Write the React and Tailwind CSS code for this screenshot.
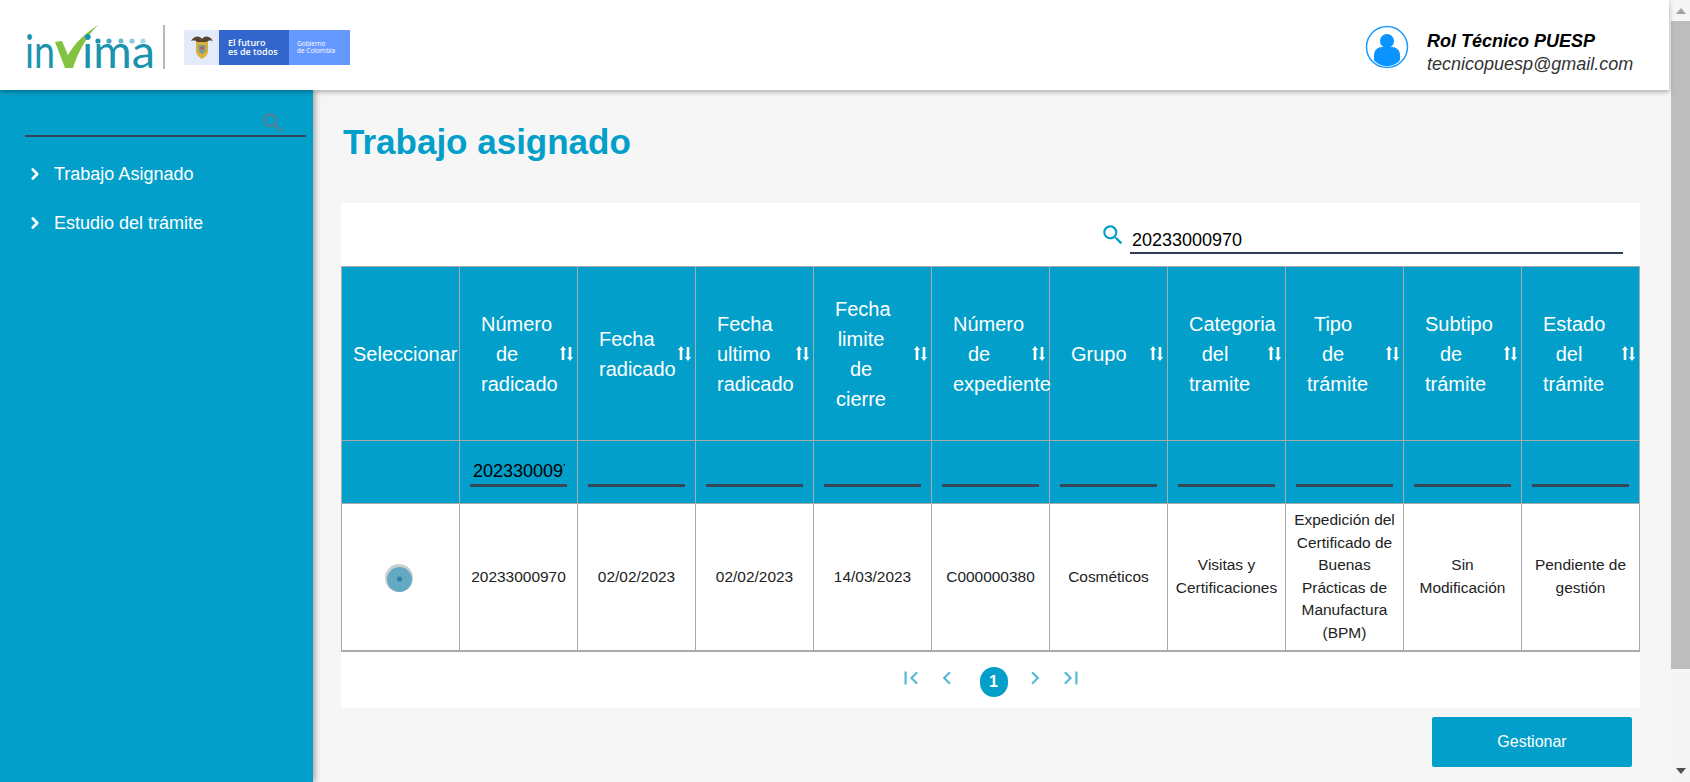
import { ChevronRight } from "lucide-react";
import { MdSearch, MdFirstPage, MdLastPage, MdChevronLeft, MdChevronRight } from "react-icons/md";

const columns = [
  "Número de radicado",
  "Fecha radicado",
  "Fecha ultimo radicado",
  "Fecha limite de cierre",
  "Número de expediente",
  "Grupo",
  "Categoria del tramite",
  "Tipo de trámite",
  "Subtipo de trámite",
  "Estado del trámite",
];

const row = [
  "20233000970",
  "02/02/2023",
  "02/02/2023",
  "14/03/2023",
  "C000000380",
  "Cosméticos",
  "Visitas y Certificaciones",
  "Expedición del Certificado de Buenas Prácticas de Manufactura (BPM)",
  "Sin Modificación",
  "Pendiente de gestión",
];

function SortIcon() {
  return (
    <svg width="13" height="15" viewBox="0 0 13 15" className="ml-[27px] shrink-0" fill="#fff">
      <path d="M1.7 14V4H0l3-4 3 4H4.3v10z" />
      <path d="M8.7 1v10H7l3 4 3-4h-1.700V1z" />
    </svg>
  );
}

function InvimaLogo() {
  return (
    <svg width="135" height="50" viewBox="0 0 135 50" className="shrink-0 overflow-visible">
      <text x="1" y="46" fontFamily="Lato" fontWeight="400" fontSize="46" fill="#1c93ae" textLength="30" lengthAdjust="spacingAndGlyphs">in</text>
      <path d="M31 20 L38 19 L44 33 C50 22 60 12 74 3 C63 14 54 30 49 46 L41 46 Z" fill="#84c341" />
      <text x="58" y="46" fontFamily="Lato" fontWeight="400" fontSize="46" fill="#1c93ae" textLength="73" lengthAdjust="spacingAndGlyphs">ima</text>
      <circle cx="74" cy="19" r="2.600" fill="#1c93ae" />
      <circle cx="85" cy="19" r="2.600" fill="#4aa9c1" />
      <circle cx="97" cy="19" r="2.600" fill="#6bb9cd" />
      <circle cx="108" cy="19" r="2.600" fill="#8cc9d9" />
      <circle cx="119" cy="19" r="2.600" fill="#aad7e4" />
    </svg>
  );
}

function GovBanner() {
  return (
    <div className="flex h-[35px] w-[166px] font-['Open_Sans',sans-serif] text-white">
      <div className="flex w-[35px] items-center justify-center bg-[#e3ebfa]">
        <svg width="24" height="26" viewBox="0 0 24 26">
          <path d="M1 7 C5 1 10 2 12 5 C14 2 19 1 23 7 C19 6 18 7 17 8 H7 C6 7 5 6 1 7Z" fill="#5a4630" />
          <path d="M6 8 H18 V17 C18 21 15 23 12 25 C9 23 6 21 6 17Z" fill="#d9b13b" />
          <path d="M8.500 11 H15.500 V16 C15.500 18 14 19 12 20 C10 19 8.500 18 8.500 16Z" fill="#7d9a93" />
          <circle cx="12" cy="14" r="1.600" fill="#c0504d" />
        </svg>
      </div>
      <div className="flex w-[70px] items-center bg-[#3366cc] pl-[9px] text-[9px] font-semibold leading-[9px]">
        <p>El futuro<br />es de todos</p>
      </div>
      <div className="flex flex-1 items-center bg-[#6699ff] pl-[8px] text-[6.5px] leading-[7.5px]">
        <p>Gobierno<br />de Colombia</p>
      </div>
    </div>
  );
}

function Avatar() {
  return (
    <svg width="44" height="44" viewBox="0 0 44 44" className="shrink-0">
      <circle cx="22" cy="22" r="20.500" fill="#fff" stroke="#1a9aff" strokeWidth="1.500" />
      <circle cx="22" cy="16" r="7" fill="#0a94ff" />
      <path d="M9 35 V30 C9 25 13 22 17 22 H27 C31 22 35 25 35 30 V35 C32 39 27 41 22 41 C17 41 12 39 9 35Z" fill="#0a94ff" />
    </svg>
  );
}

function Header() {
  return (
    <header className="relative z-20 flex h-[90px] items-center justify-between bg-white pt-[4px] shadow-[0_2px_5px_rgba(0,0,0,0.3)]">
      <div className="flex items-center pl-[24px]">
        <InvimaLogo />
        <div className="ml-[4px] h-[44px] w-[2px] bg-[#b8b8b8]" />
        <div className="ml-[19px]">
          <GovBanner />
        </div>
      </div>
      <div className="flex items-center pr-[18px]">
        <Avatar />
        <div className="ml-[18px] mt-[12px] w-[224px] text-[18px] italic leading-[23px]">
          <div className="font-bold text-black">Rol Técnico PUESP</div>
          <div className="text-[#333]">tecnicopuesp@gmail.com</div>
        </div>
      </div>
    </header>
  );
}

function Sidebar() {
  return (
    <aside className="relative z-10 h-[692px] w-[313px] shrink-0 bg-[#029fca] pl-[25px] pt-[20px] shadow-[2px_0_6px_rgba(0,0,0,0.35)]">
      <div className="flex h-[27px] w-[281px] justify-end border-b-2 border-[#33475b] pr-[20px]">
        <MdSearch size={26} className="text-[#5d7d8c]" />
      </div>
      <nav className="mt-[25px] flex flex-col gap-[25px] text-[18px] leading-[24px] text-white">
        {["Trabajo Asignado", "Estudio del trámite"].map((item) => (
          <div key={item} className="flex items-center">
            <ChevronRight size={18} strokeWidth={3.5} className="ml-[1px]" />
            <span className="ml-[10px]">{item}</span>
          </div>
        ))}
      </nav>
    </aside>
  );
}

function DataTable() {
  return (
    <table className="w-[1299px] table-fixed border-collapse">
      <thead>
        <tr className="h-[174px] bg-[#029fca] text-[20px] leading-[30px] text-white">
          <th className="w-[118px] border border-[#aaa] pl-[11px] text-left font-normal">Seleccionar</th>
          {columns.map((col) => (
            <th key={col} className="border border-[#aaa] p-0 font-normal">
              <div className="flex items-center">
                <span className="ml-[21px] block w-[52px] shrink-0 text-center">{col}</span>
                <SortIcon />
              </div>
            </th>
          ))}
        </tr>
        <tr className="h-[63px] bg-[#029fca]">
          <th className="border border-[#aaa]" />
          {columns.map((col, i) => (
            <th key={col} className="border border-[#aaa] p-0 align-top">
              <input
                readOnly
                value={i === 0 ? "20233000970" : ""}
                className="mx-auto mt-[15px] block h-[31px] w-[97px] border-b-[3px] border-[#37475a] bg-transparent pl-[3px] pr-[2px] pt-[2px] text-[18px] font-normal text-black outline-none"
              />
            </th>
          ))}
        </tr>
      </thead>
      <tbody>
        <tr className="h-[147px] bg-white text-center text-[15.46px] leading-[22.5px] text-[#222]">
          <td className="border border-[#aaa] border-b-2">
            <svg width="28" height="30" viewBox="0 0 28 30" className="mx-auto mt-[3px] -translate-x-[2px]">
              <circle cx="14" cy="15" r="14" fill="#cfcfd2" />
              <circle cx="14.500" cy="16.500" r="12.500" fill="#63a9c3" />
              <circle cx="14.500" cy="16" r="2.600" fill="#2a84a8" />
            </svg>
          </td>
          {row.map((val, i) => (
            <td key={i} className="border border-[#aaa] border-b-2 px-[6px]">{val}</td>
          ))}
        </tr>
      </tbody>
    </table>
  );
}

function Pagination() {
  return (
    <div className="flex h-[56px] items-start justify-center pt-[15px] text-[#55b9d8]">
      <MdFirstPage size={26} className="-mt-[2px]" />
      <MdChevronLeft size={26} className="-mt-[2px] ml-[10px]" />
      <div className="ml-[20px] flex h-[30px] w-[28px] items-center justify-center rounded-full bg-[#029fca] text-[16px] font-bold text-white">1</div>
      <MdChevronRight size={26} className="-mt-[2px] ml-[14px]" />
      <MdLastPage size={26} className="-mt-[2px] ml-[10px]" />
    </div>
  );
}

function Scrollbar() {
  return (
    <div className="flex w-[21px] shrink-0 flex-col bg-[#f5f5f5]">
      <div className="flex h-[21px] items-center justify-center pl-[2px]">
        <svg width="10" height="6" viewBox="0 0 10 6"><path d="M5 0l5 6H0z" fill="#a3a3a3" /></svg>
      </div>
      <div className="ml-[2px] h-[648px] bg-[#bdbdbd]" />
      <div className="flex flex-1 items-end justify-center pb-[8px] pl-[2px]">
        <svg width="10" height="6" viewBox="0 0 10 6"><path d="M0 0h10L5 6z" fill="#505050" /></svg>
      </div>
    </div>
  );
}

export default function App() {
  return (
    <div className="flex h-[782px] w-[1690px] overflow-hidden bg-[#f6f6f6] font-['Liberation_Sans',Arial,sans-serif]">
      <div className="flex w-[1669px] flex-col">
        <Header />
        <div className="flex flex-1">
          <Sidebar />
          <main className="flex-1 pl-[28px] pr-[29px] pt-[22px]">
            <h1 className="h-[60px] pl-[2px] text-[35px] font-bold leading-[60px] text-[#029fca]">Trabajo asignado</h1>
            <section className="mt-[31px] bg-white">
              <div className="flex h-[63px] items-start pl-[759px] pt-[19px]">
                <MdSearch size={26} className="text-[#029fca]" />
                <input
                  readOnly
                  value="20233000970"
                  className="ml-[4px] mt-[3px] h-[29px] w-[493px] border-b-2 border-[#2f3f52] bg-transparent pl-[2px] pt-[3px] text-[18px] text-black outline-none"
                />
              </div>
              <DataTable />
              <Pagination />
            </section>
            <div className="mt-[9px] flex justify-end pr-[8px]">
              <button className="h-[50px] w-[200px] rounded-[2px] bg-[#029fca] text-[16px] text-white">Gestionar</button>
            </div>
          </main>
        </div>
      </div>
      <Scrollbar />
    </div>
  );
}
